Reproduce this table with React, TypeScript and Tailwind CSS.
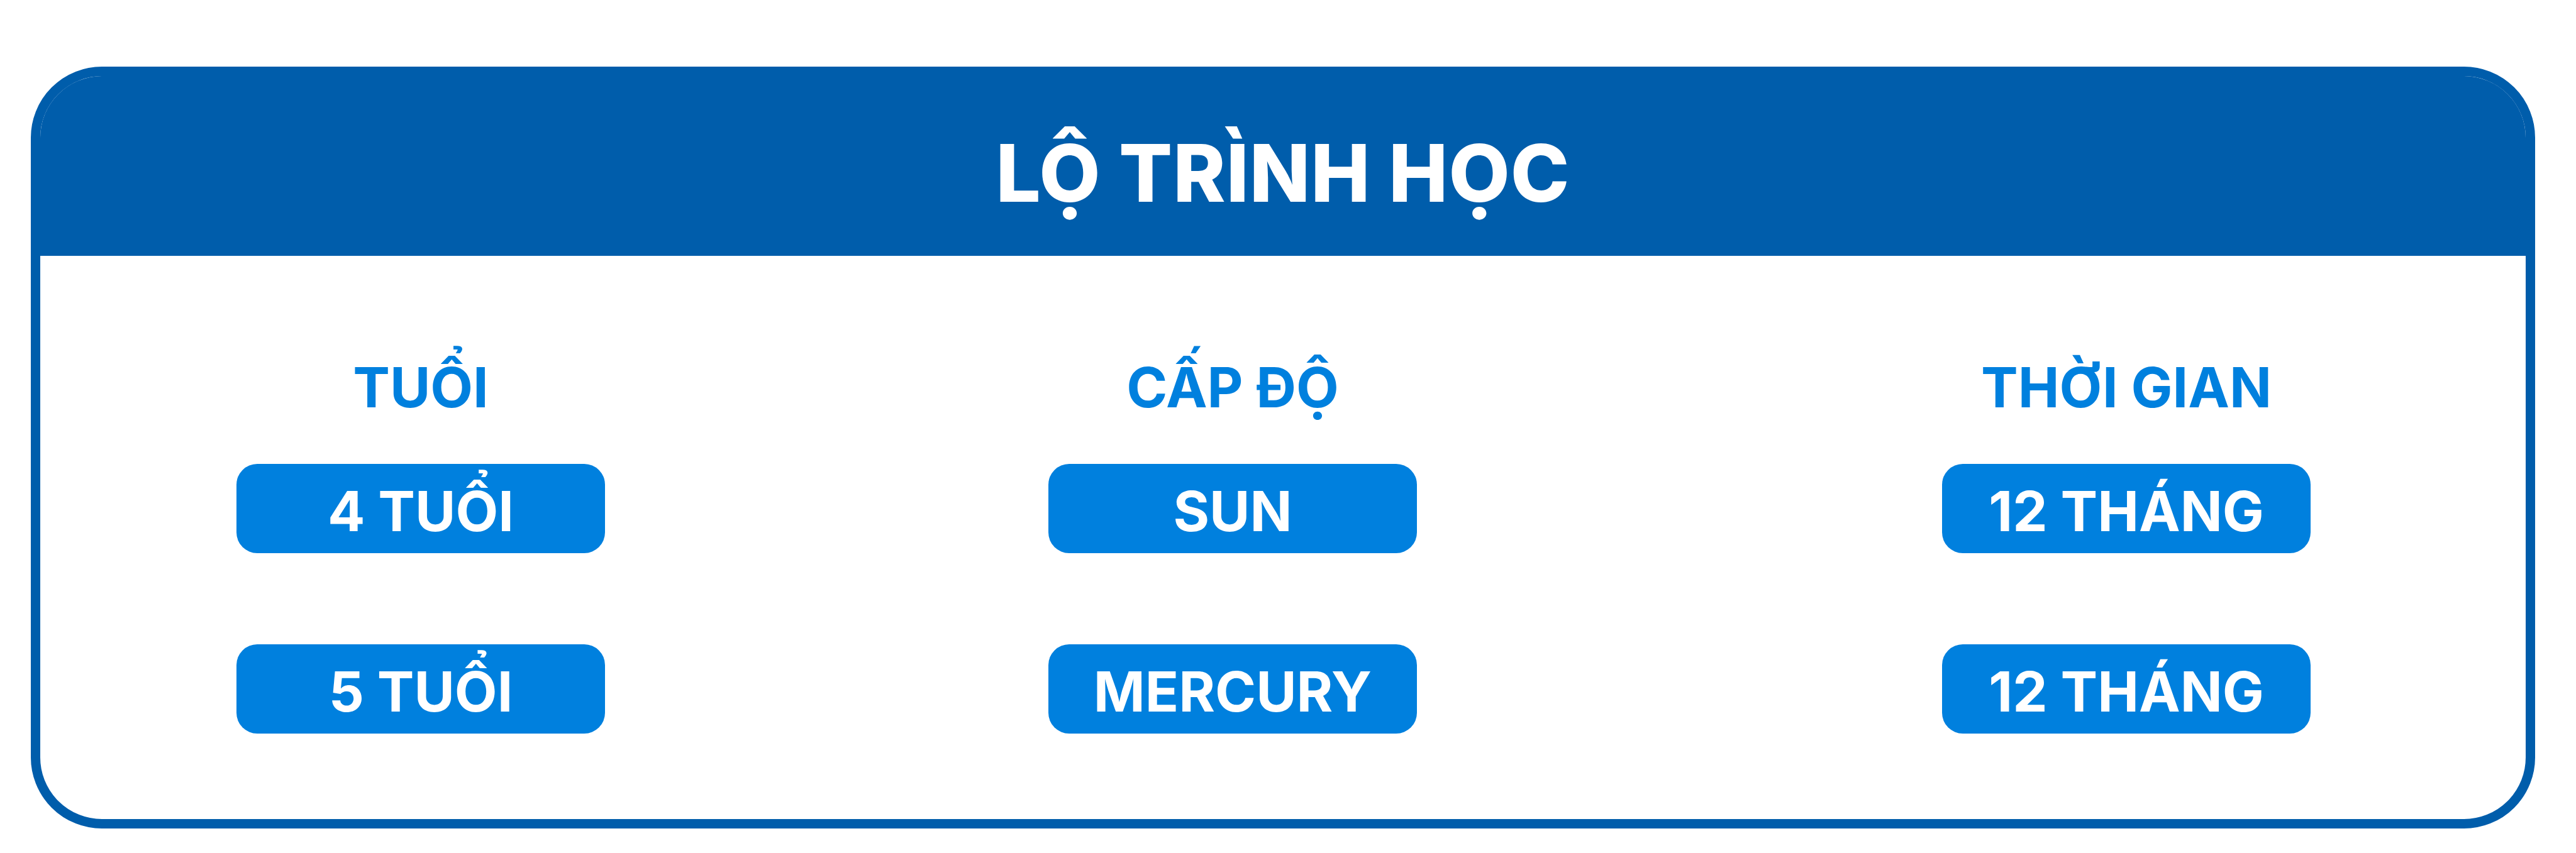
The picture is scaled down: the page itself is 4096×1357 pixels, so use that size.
const columns = [
  { title: 'TUỔI', items: ['4 TUỔI', '5 TUỔI'] },
  { title: 'CẤP ĐỘ', items: ['SUN', 'MERCURY'] },
  { title: 'THỜI GIAN', items: ['12 THÁNG', '12 THÁNG'] },
];

// khoảng cách giữa các cột không đều trong bản gốc
const gaps = ['', 'ml-[705px]', 'ml-[835px]'];

const App = () => {
  return (
    <main className="w-[4096px] h-[1357px] bg-white pt-[106px] pl-[49px] font-['Inter',sans-serif]">
      <div className="w-[3982px] h-[1212px] border-[15px] border-[#005dab] rounded-[113px] overflow-hidden flex flex-col">
        {/* Header */}
        <div className="h-[286px] bg-[#005dab] flex justify-center pt-[91px]">
          <h1 className="text-[126px] leading-none font-extrabold text-white tracking-[1px]">LỘ TRÌNH HỌC</h1>
        </div>

        {/* Columns */}
        <div className="flex pl-[312px] pt-[165px]">
          {columns.map((col, i) => (
            <div key={i} className={`w-[586px] flex flex-col items-center ${gaps[i]}`}>
              <h2 className="text-[88px] leading-none font-bold text-[#0080de]">{col.title}</h2>
              <div className="mt-[78px] flex flex-col gap-[145px] w-full">
                {col.items.map((item, j) => (
                  <div
                    key={j}
                    className="h-[142px] w-full rounded-[33px] bg-[#0080de] flex items-center justify-center pt-[8px]"
                  >
                    <span className="text-[88px] leading-none font-bold text-white">{item}</span>
                  </div>
                ))}
              </div>
            </div>
          ))}
        </div>
      </div>
    </main>
  );
};

export default App;
